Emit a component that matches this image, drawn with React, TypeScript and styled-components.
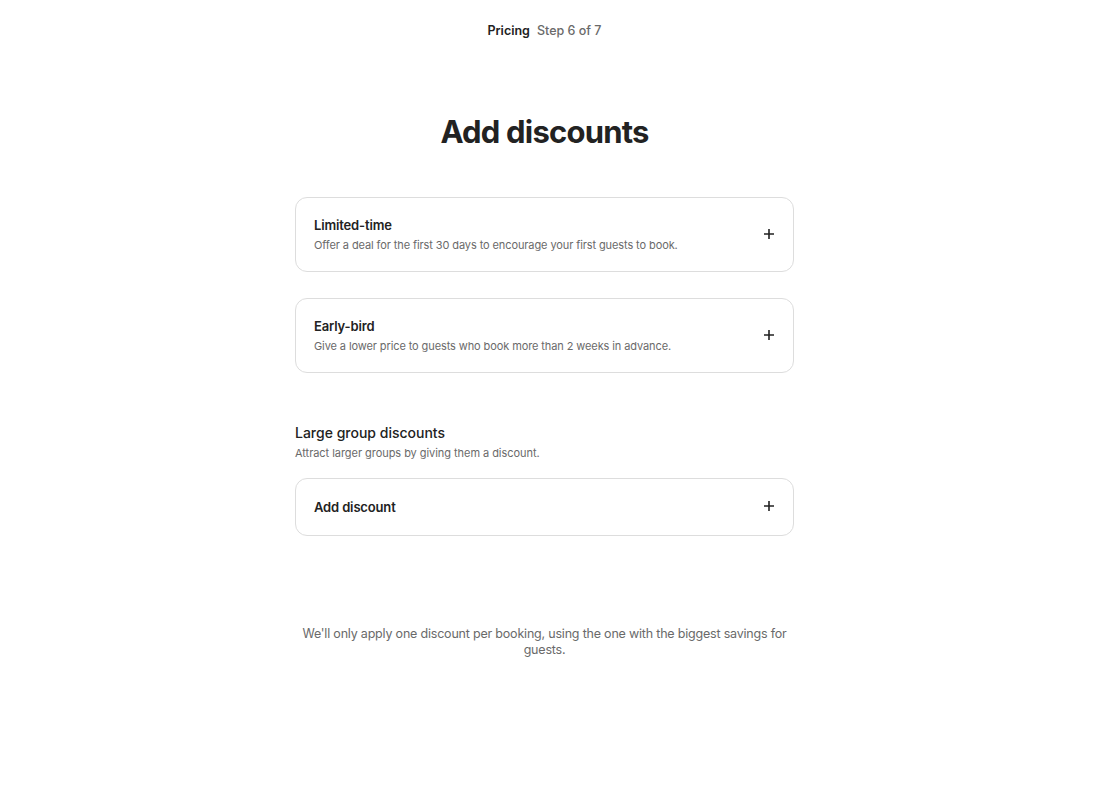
import React from 'react';
import styled, { createGlobalStyle } from 'styled-components';

const GlobalStyle = createGlobalStyle`
    html, body {
        margin: 0;
        padding: 0;
        background: #ffffff;
    }
    body {
        font-family: Inter, "Noto Sans", "Liberation Sans", sans-serif;
        color: #222222;
        -webkit-font-smoothing: antialiased;
    }
`

const Page = styled.div`
    width: 1089px;
    display: flex;
    flex-direction: column;
    align-items: center;
`

const StepBar = styled.header`
    display: flex;
    gap: 7px;
    align-items: baseline;
    padding-top: 23px;
    height: 20px;
    font-size: 12.5px;
`

const StepName = styled.span`
    font-weight: 600;
    color: #222222;
`

const StepCount = styled.span`
    font-weight: 500;
    color: #6a6a6a;
`

const Title = styled.h1`
    margin: 69px 0 0;
    font-size: 31px;
    line-height: 40px;
    font-weight: 700;
    letter-spacing: -0.8px;
    color: #222222;
`

const Content = styled.main`
    width: 499px;
    display: flex;
    flex-direction: column;
    margin-top: 45px;
`

const Cards = styled.div`
    display: flex;
    flex-direction: column;
    gap: 26px;
`

const Card = styled.button<{ compact?: boolean }>`
    box-sizing: border-box;
    width: 100%;
    height: ${(props) => props.compact ? '58px' : '75px'};
    display: flex;
    align-items: center;
    justify-content: space-between;
    padding: 0 18px;
    background: #ffffff;
    border: 1px solid #dddddd;
    border-radius: 12px;
    font-family: inherit;
    text-align: left;
    cursor: pointer;
`

const CardText = styled.div`
    display: flex;
    flex-direction: column;
    gap: 5px;
`

const CardTitle = styled.span`
    font-size: 13px;
    font-weight: 600;
    color: #222222;
    letter-spacing: -0.15px;
`

const CardDesc = styled.span`
    font-size: 11px;
    color: #6a6a6a;
    letter-spacing: -0.1px;
`

const PlusIcon = styled.svg`
    width: 12px;
    height: 12px;
    flex-shrink: 0;
    margin-bottom: 2px;
`

const GroupSection = styled.section`
    margin-top: 50px;
    display: flex;
    flex-direction: column;
`

const GroupTitle = styled.h2`
    margin: 0;
    font-size: 14px;
    line-height: 20px;
    font-weight: 500;
    color: #222222;
`

const GroupDesc = styled.p`
    margin: 2px 0 17px;
    font-size: 11px;
    line-height: 16px;
    color: #6a6a6a;
    letter-spacing: -0.05px;
`

const Note = styled.p`
    margin: 90px 0 0;
    text-align: center;
    font-size: 12.5px;
    line-height: 16px;
    letter-spacing: -0.2px;
    color: #6a6a6a;
`

const Plus = () => (
    <PlusIcon viewBox="0 0 12 12" fill="none" stroke="#222222" strokeWidth="1.6">
        <path d="M6 1v10M1 6h10" />
    </PlusIcon>
);

type DiscountCardProps = {
    title: string;
    description?: string;
};

const DiscountCard = ({ title, description }: DiscountCardProps) => (
    <Card compact={!description}>
        <CardText>
            <CardTitle>{title}</CardTitle>
            {description && <CardDesc>{description}</CardDesc>}
        </CardText>
        <Plus />
    </Card>
);

export default function App() {
    return (
        <>
            <GlobalStyle />
            <Page>
                <StepBar>
                    <StepName>Pricing</StepName>
                    <StepCount>Step 6 of 7</StepCount>
                </StepBar>
                <Title>Add discounts</Title>
                <Content>
                    <Cards>
                        <DiscountCard
                            title="Limited-time"
                            description="Offer a deal for the first 30 days to encourage your first guests to book."
                        />
                        <DiscountCard
                            title="Early-bird"
                            description="Give a lower price to guests who book more than 2 weeks in advance."
                        />
                    </Cards>
                    <GroupSection>
                        <GroupTitle>Large group discounts</GroupTitle>
                        <GroupDesc>Attract larger groups by giving them a discount.</GroupDesc>
                        <DiscountCard title="Add discount" />
                    </GroupSection>
                    <Note>
                        We'll only apply one discount per booking, using the one with the biggest savings for guests.
                    </Note>
                </Content>
            </Page>
        </>
    );
}
